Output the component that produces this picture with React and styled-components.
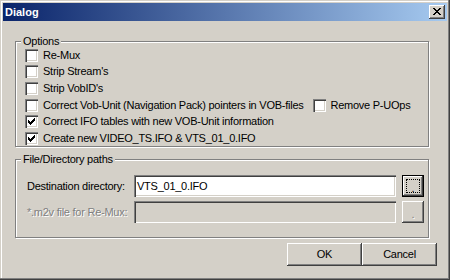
import React from "react";
import styled, { createGlobalStyle, css } from "styled-components";

const Global = createGlobalStyle`
  html, body { margin: 0; padding: 0; background: #D4D0C8; }
  body { font-family: "Liberation Sans", Arial, sans-serif; font-size: 11px; color: #000; }
  * { box-sizing: border-box; }
`;

const Win = styled.div`
  width: 450px;
  height: 280px;
  padding: 3px;
  background: #D4D0C8;
  display: flex;
  flex-direction: column;
  letter-spacing: -0.25px;
  box-shadow: inset -1px -1px 0 #404040, inset -2px -2px 0 #808080,
    inset 1px 1px 0 #D4D0C8, inset 2px 2px 0 #ffffff;
`;

const Caption = styled.div`
  height: 18px;
  flex: none;
  display: flex;
  align-items: center;
  justify-content: space-between;
  padding: 0 2px;
  background: linear-gradient(to right, #0A246A, #A6CAF0);
`;

const CaptionText = styled.span`
  color: #fff;
  font-weight: bold;
  font-size: 11px;
  line-height: 13px;
  letter-spacing: 0;
`;

const raised = css`
  background: #D4D0C8;
  box-shadow: inset -1px -1px 0 #404040, inset 1px 1px 0 #ffffff,
    inset -2px -2px 0 #808080, inset 2px 2px 0 #D4D0C8;
`;

const CloseBtn = styled.div`
  width: 16px;
  height: 14px;
  ${raised};
  display: flex;
  align-items: center;
  justify-content: center;
  svg { display: block; margin-top: -1px; margin-left: -1px; }
`;

const Body = styled.div`
  flex: 1;
  display: flex;
  flex-direction: column;
  padding: 20px 0 0 12px;
`;

const Group = styled.div`
  position: relative;
  width: 414px;
  height: ${(p) => p.$h}px;
  margin-top: ${(p) => p.$mt || 0}px;
  border: 1px solid #808080;
  box-shadow: 1px 1px 0 #ffffff, inset 1px 1px 0 #ffffff;
  padding: ${(p) => p.$pad};
`;

const Legend = styled.span`
  position: absolute;
  top: -7px;
  left: 5px;
  padding: 0 2px;
  line-height: 13px;
  background: #D4D0C8;
`;

const OptionList = styled.div`
  display: flex;
  flex-direction: column;
`;

const OptionRow = styled.div`
  height: 16.6px;
  display: flex;
  align-items: center;
`;

const CheckItem = styled.label`
  display: flex;
  align-items: center;
  gap: 5px;
  line-height: 13px;
  white-space: nowrap;
  margin-left: ${(p) => p.$ml || 0}px;
`;

const Box = styled.span`
  width: 13px;
  height: 13px;
  flex: none;
  background: #fff;
  box-shadow: inset 1px 1px 0 #808080, inset 2px 2px 0 #404040,
    inset -1px -1px 0 #ffffff, inset -2px -2px 0 #D4D0C8;
  svg { display: block; }
`;

const CheckMark = () => (
  <svg width="13" height="13" viewBox="0 0 13 13" shapeRendering="crispEdges">
    <path
      d="M3 5h1v3h-1z M4 6h1v3h-1z M5 7h1v3h-1z M6 6h1v3h-1z M7 5h1v3h-1z M8 4h1v3h-1z M9 3h1v3h-1z"
      fill="#000"
    />
  </svg>
);

const Check = ({ label, checked, ml }) => (
  <CheckItem $ml={ml}>
    <Box>{checked && <CheckMark />}</Box>
    <span>{label}</span>
  </CheckItem>
);

const PathGrid = styled.div`
  display: grid;
  grid-template-columns: 107px 262px 22px;
  grid-template-rows: 22px 22px;
  column-gap: 0;
  row-gap: 4px;
  align-items: center;
`;

const FieldLabel = styled.span`
  line-height: 13px;
  white-space: nowrap;
  color: ${(p) => (p.$disabled ? "#808080" : "#000")};
  text-shadow: ${(p) => (p.$disabled ? "1px 1px 0 #ffffff" : "none")};
`;

const TextBox = styled.div`
  height: 22px;
  display: flex;
  align-items: center;
  padding: 0 3px;
  line-height: 13px;
  background: ${(p) => (p.$disabled ? "#D4D0C8" : "#ffffff")};
  box-shadow: inset 1px 1px 0 #808080, inset 2px 2px 0 #404040,
    inset -1px -1px 0 #ffffff, inset -2px -2px 0 #D4D0C8;
`;

const SmallBtn = styled.div`
  margin-left: 6px;
  width: 22px;
  height: 22px;
  position: relative;
  ${raised};
  ${(p) =>
    p.$focused &&
    css`
      box-shadow: inset 0 0 0 1px #000, inset -2px -2px 0 #404040,
        inset 2px 2px 0 #ffffff, inset -3px -3px 0 #808080;
    `}
  display: flex;
  align-items: flex-end;
  justify-content: center;
  padding-bottom: 5px;
  line-height: 8px;
  font-size: 11px;
  color: ${(p) => (p.$disabled ? "#808080" : "#000")};
  text-shadow: ${(p) => (p.$disabled ? "1px 1px 0 #ffffff" : "none")};
`;

const FocusRect = styled.span`
  position: absolute;
  inset: 4px;
  border: 1px dotted #000;
`;

const ButtonRow = styled.div`
  margin-top: 5px;
  padding-right: 10px;
  display: flex;
  justify-content: flex-end;
`;

const PushBtn = styled.div`
  width: 75px;
  height: 23px;
  ${raised};
  display: flex;
  align-items: center;
  justify-content: center;
  line-height: 13px;
`;

export default function App() {
  return (
    <>
      <Global />
      <Win>
        <Caption>
          <CaptionText>Dialog</CaptionText>
          <CloseBtn>
            <svg width="8" height="7" viewBox="0 0 8 7" shapeRendering="crispEdges">
              <path
                d="M0 0h2v1h-2z M6 0h2v1h-2z M1 1h2v1h-2z M5 1h2v1h-2z M2 2h4v1h-4z M3 3h2v1h-2z M2 4h4v1h-4z M1 5h2v1h-2z M5 5h2v1h-2z M0 6h2v1h-2z M6 6h2v1h-2z"
                fill="#000"
              />
            </svg>
          </CloseBtn>
        </Caption>
        <Body>
          <Group $h={106} $pad="5px 0 0 9px">
            <Legend>Options</Legend>
            <OptionList>
              <OptionRow>
                <Check label="Re-Mux" />
              </OptionRow>
              <OptionRow>
                <Check label="Strip Stream's" />
              </OptionRow>
              <OptionRow>
                <Check label="Strip VobID's" />
              </OptionRow>
              <OptionRow>
                <Check label="Correct Vob-Unit (Navigation Pack) pointers in VOB-files" />
                <Check label="Remove P-UOps" ml={9} />
              </OptionRow>
              <OptionRow>
                <Check label="Correct IFO tables with new VOB-Unit information" checked />
              </OptionRow>
              <OptionRow>
                <Check label="Create new VIDEO_TS.IFO & VTS_01_0.IFO" checked />
              </OptionRow>
            </OptionList>
          </Group>
          <Group $h={79} $mt={12} $pad="15px 0 0 11px">
            <Legend>File/Directory paths</Legend>
            <PathGrid>
              <FieldLabel>Destination directory:</FieldLabel>
              <TextBox>VTS_01_0.IFO</TextBox>
              <SmallBtn $focused>
                <FocusRect />.
              </SmallBtn>
              <FieldLabel $disabled>*.m2v file for Re-Mux:</FieldLabel>
              <TextBox $disabled />
              <SmallBtn $disabled>.</SmallBtn>
            </PathGrid>
          </Group>
          <ButtonRow>
            <PushBtn>OK</PushBtn>
            <PushBtn>Cancel</PushBtn>
          </ButtonRow>
        </Body>
      </Win>
    </>
  );
}
